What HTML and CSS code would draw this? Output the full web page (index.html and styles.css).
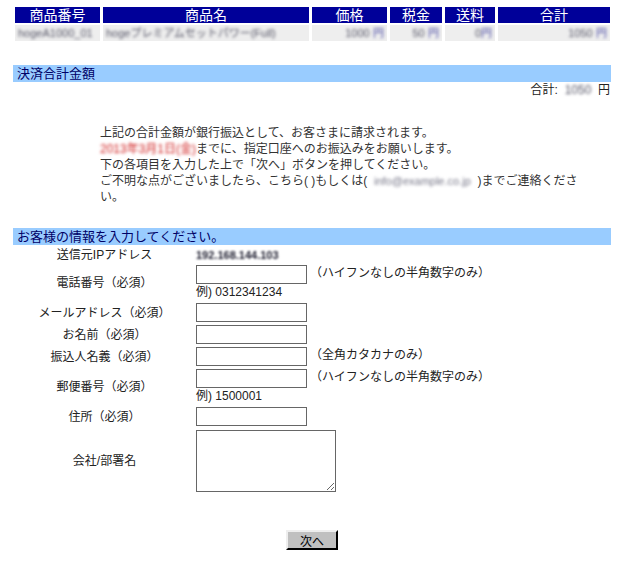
FILE: index.html
```html
<!DOCTYPE html>
<html lang="ja">
<head>
    <meta charset="UTF-8">
    <title>お振込み手続き</title>
    <link rel="stylesheet" href="styles.css">
</head>
<body>
    <div class="page">
        <table class="items">
            <tr>
                <th class="c-code">商品番号</th>
                <th class="c-name">商品名</th>
                <th class="c-price">価格</th>
                <th class="c-tax">税金</th>
                <th class="c-ship">送料</th>
                <th class="c-total">合計</th>
            </tr>
            <tr>
                <td class="left"><span class="masked">hogeA1000_01</span></td>
                <td class="left"><span class="masked">hogeプレミアムセットパワー(Full)</span></td>
                <td class="right"><span class="masked">1000</span> <span class="masked yen">円</span></td>
                <td class="right"><span class="masked">50</span> <span class="masked yen">円</span></td>
                <td class="right"><span class="masked">0</span><span class="masked yen">円</span></td>
                <td class="right"><span class="masked">1050</span> <span class="masked yen">円</span></td>
            </tr>
        </table>

        <h2 class="section">決済合計金額</h2>
        <div class="sum">合計: &nbsp;<span class="masked">1050</span> &nbsp;円</div>

        <p class="notice">
            上記の合計金額が銀行振込として、お客さまに請求されます。<br>
            <span class="masked red">2013年3月1日(金)</span>までに、指定口座へのお振込みをお願いします。<br>
            下の各項目を入力した上で「次へ」ボタンを押してください。<br>
            ご不明な点がございましたら、こちら( )もしくは(&nbsp; <span class="masked mail">info@example.co.jp</span> &nbsp;)までご連絡くださ<br>い。
        </p>

        <h2 class="section">お客様の情報を入力してください。</h2>
        <form class="customer" action="#" method="post">
            <table class="fields">
                <tr class="ip-row">
                    <th>送信元IPアドレス</th>
                    <td><span class="masked ip">192.168.144.103</span></td>
                </tr>
                <tr>
                    <th>電話番号（必須）</th>
                    <td>
                        <input type="text" name="tel"><span class="hint">（ハイフンなしの半角数字のみ）</span>
                        <div class="example">例) 0312341234</div>
                    </td>
                </tr>
                <tr>
                    <th>メールアドレス（必須）</th>
                    <td><input type="text" name="mail"></td>
                </tr>
                <tr>
                    <th>お名前（必須）</th>
                    <td><input type="text" name="name"></td>
                </tr>
                <tr>
                    <th>振込人名義（必須）</th>
                    <td><input type="text" name="kana"><span class="hint">（全角カタカナのみ）</span></td>
                </tr>
                <tr>
                    <th>郵便番号（必須）</th>
                    <td>
                        <input type="text" name="zip"><span class="hint">（ハイフンなしの半角数字のみ）</span>
                        <div class="example">例) 1500001</div>
                    </td>
                </tr>
                <tr>
                    <th>住所（必須）</th>
                    <td><input type="text" name="address"></td>
                </tr>
                <tr>
                    <th>会社/部署名</th>
                    <td><textarea name="company"></textarea></td>
                </tr>
            </table>
            <div class="actions">
                <button type="submit" class="next-button">次へ</button>
            </div>
        </form>
    </div>
</body>
</html>
```

FILE: styles.css
```css
* {
    margin: 0;
    padding: 0;
    box-sizing: border-box;
}

body {
    font-family: "Liberation Sans", "Noto Sans CJK JP", sans-serif;
    font-size: 12px;
    line-height: 16px;
    color: #222;
    background: #fff;
}

.page {
    width: 611px;
    padding-left: 13px;
}

/* order summary */
.items {
    border-collapse: separate;
    border-spacing: 3px 2px;
    margin: 5px 0 0 -1px;
    width: 601px;
    table-layout: fixed;
}

.items th {
    background-color: #000099;
    color: #fff;
    font-weight: normal;
    font-size: 14px;
    height: 16px;
    line-height: 16px;
    text-align: center;
}

.items td {
    background-color: #eeeeee;
    height: 16px;
    line-height: 16px;
    padding: 0 3px;
    white-space: nowrap;
    overflow: hidden;
}

.c-code { width: 85px; }
.c-name { width: 206px; }
.c-price { width: 75px; }
.c-tax { width: 52px; }
.c-ship { width: 50px; }
.c-total { width: 112px; }

.left { text-align: left; }
.right { text-align: right; }

/* blurred-out order values */
.masked {
    color: #556;
    filter: blur(1.4px);
    font-size: 11px;
}

.masked.yen {
    color: #4040a0;
}

.masked.red {
    color: #d02020;
    font-size: 12px;
}

.masked.mail {
    color: #778;
}

.masked.ip {
    color: #223;
    font-weight: bold;
    filter: blur(1.1px);
}

/* section headings */
.section {
    background-color: #99ccff;
    color: #000066;
    font-size: 13px;
    font-weight: normal;
    height: 17px;
    line-height: 17px;
    padding-left: 4px;
    width: 598px;
}

.items + .section {
    margin-top: 22px;
}

.sum {
    text-align: right;
    width: 597px;
    line-height: 17px;
}

.sum .masked {
    font-size: 12px;
}

.notice {
    margin: 26px 0 23px 87px;
    width: 490px;
    color: #333;
}

/* customer form */
.fields {
    border-collapse: collapse;
}

.fields th {
    width: 183px;
    font-weight: normal;
    text-align: center;
    vertical-align: middle;
    padding: 2px 0 1px;
}

.fields td {
    padding: 2px 0 1px;
    vertical-align: top;
}

.ip-row th,
.ip-row td {
    padding: 2px 0 0;
    height: 16px;
}

.fields input[type="text"] {
    width: 111px;
    height: 19px;
    border: 1px solid #666;
    font-size: 12px;
    vertical-align: top;
}

.hint {
    display: inline-block;
    margin-left: 3px;
}

.example {
    line-height: 15px;
    margin-top: 1px;
}

.fields textarea {
    width: 140px;
    height: 62px;
    border: 1px solid #666;
    resize: both;
    display: block;
    margin-top: 1px;
}

.actions {
    text-align: center;
    margin-top: 37px;
    width: 598px;
}

.next-button {
    width: 52px;
    height: 20px;
    background-color: #c0c0c0;
    border: 2px outset #eee;
    border-right-color: #333;
    border-bottom-color: #333;
    font-family: inherit;
    font-size: 12px;
    color: #000;
    cursor: pointer;
}
```
